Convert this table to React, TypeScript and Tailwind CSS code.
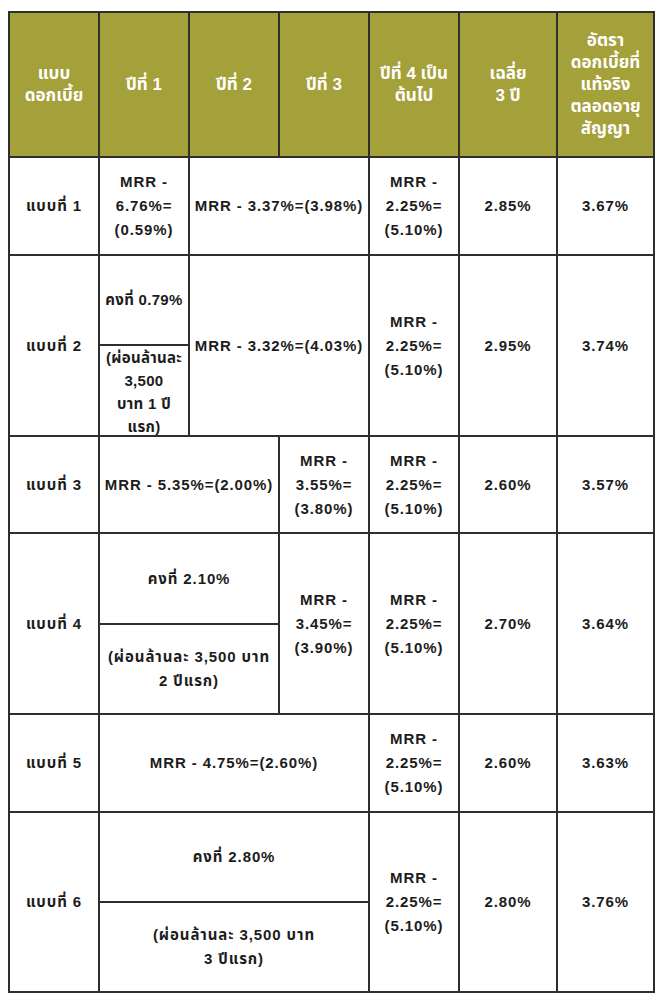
import React from 'react';

const Head: React.FC<{ children: React.ReactNode }> = ({ children }) => (
  <div className="flex items-center justify-center bg-[#a4a03a] px-1 text-center text-[17px] leading-[22px] font-bold text-white">
    <div>{children}</div>
  </div>
);

const Cell: React.FC<{ className?: string; children: React.ReactNode }> = ({ className = '', children }) => (
  <div className={`flex items-center justify-center bg-white px-1 text-center text-[15px] leading-[24px] font-bold tracking-[0.9px] text-[#1c1c1c] ${className}`}>
    <div>{children}</div>
  </div>
);

const Mrr225 = () => (
  <>
    MRR -<br />2.25%=<br />(5.10%)
  </>
);

export default function App() {
  return (
    <div className="min-h-screen bg-white pl-[8px] pt-[11px] font-['Liberation_Sans','Noto_Sans_Thai','Noto_Sans',sans-serif]">
      <div className="grid w-fit grid-cols-[88px_88px_88px_88px_88px_96px_95px] grid-rows-[143px_96px_88px_89px_95px_89px_88px_96px_88px_88px] gap-[2px] border-2 border-[#2e2e2e] bg-[#2e2e2e]">
        {/* header */}
        <Head>แบบ<br />ดอกเบี้ย</Head>
        <Head>ปีที่ 1</Head>
        <Head>ปีที่ 2</Head>
        <Head>ปีที่ 3</Head>
        <Head>ปีที่ 4 เป็น<br />ต้นไป</Head>
        <Head>เฉลี่ย<br />3 ปี</Head>
        <Head>อัตรา<br />ดอกเบี้ยที่<br />แท้จริง<br />ตลอดอายุ<br />สัญญา</Head>

        {/* แบบที่ 1 */}
        <Cell className="col-start-1 row-start-2">แบบที่ 1</Cell>
        <Cell className="col-start-2 row-start-2">MRR -<br />6.76%=<br />(0.59%)</Cell>
        <Cell className="col-start-3 col-span-2 row-start-2">MRR - 3.37%=(3.98%)</Cell>
        <Cell className="col-start-5 row-start-2"><Mrr225 /></Cell>
        <Cell className="col-start-6 row-start-2">2.85%</Cell>
        <Cell className="col-start-7 row-start-2">3.67%</Cell>

        {/* แบบที่ 2 */}
        <Cell className="col-start-1 row-start-3 row-span-2">แบบที่ 2</Cell>
        <Cell className="col-start-2 row-start-3 !px-0 !tracking-[0.3px] whitespace-nowrap">คงที่ 0.79%</Cell>
        <Cell className="col-start-2 row-start-4 items-start !px-0 !leading-[23px] !tracking-[0.3px] whitespace-nowrap">(ผ่อนล้านละ<br />3,500<br />บาท 1 ปี<br />แรก)</Cell>
        <Cell className="col-start-3 col-span-2 row-start-3 row-span-2">MRR - 3.32%=(4.03%)</Cell>
        <Cell className="col-start-5 row-start-3 row-span-2"><Mrr225 /></Cell>
        <Cell className="col-start-6 row-start-3 row-span-2">2.95%</Cell>
        <Cell className="col-start-7 row-start-3 row-span-2">3.74%</Cell>

        {/* แบบที่ 3 */}
        <Cell className="col-start-1 row-start-5">แบบที่ 3</Cell>
        <Cell className="col-start-2 col-span-2 row-start-5">MRR - 5.35%=(2.00%)</Cell>
        <Cell className="col-start-4 row-start-5">MRR -<br />3.55%=<br />(3.80%)</Cell>
        <Cell className="col-start-5 row-start-5"><Mrr225 /></Cell>
        <Cell className="col-start-6 row-start-5">2.60%</Cell>
        <Cell className="col-start-7 row-start-5">3.57%</Cell>

        {/* แบบที่ 4 */}
        <Cell className="col-start-1 row-start-6 row-span-2">แบบที่ 4</Cell>
        <Cell className="col-start-2 col-span-2 row-start-6">คงที่ 2.10%</Cell>
        <Cell className="col-start-2 col-span-2 row-start-7">(ผ่อนล้านละ 3,500 บาท<br />2 ปีแรก)</Cell>
        <Cell className="col-start-4 row-start-6 row-span-2">MRR -<br />3.45%=<br />(3.90%)</Cell>
        <Cell className="col-start-5 row-start-6 row-span-2"><Mrr225 /></Cell>
        <Cell className="col-start-6 row-start-6 row-span-2">2.70%</Cell>
        <Cell className="col-start-7 row-start-6 row-span-2">3.64%</Cell>

        {/* แบบที่ 5 */}
        <Cell className="col-start-1 row-start-8">แบบที่ 5</Cell>
        <Cell className="col-start-2 col-span-3 row-start-8">MRR - 4.75%=(2.60%)</Cell>
        <Cell className="col-start-5 row-start-8"><Mrr225 /></Cell>
        <Cell className="col-start-6 row-start-8">2.60%</Cell>
        <Cell className="col-start-7 row-start-8">3.63%</Cell>

        {/* แบบที่ 6 */}
        <Cell className="col-start-1 row-start-9 row-span-2">แบบที่ 6</Cell>
        <Cell className="col-start-2 col-span-3 row-start-9">คงที่ 2.80%</Cell>
        <Cell className="col-start-2 col-span-3 row-start-10">(ผ่อนล้านละ 3,500 บาท<br />3 ปีแรก)</Cell>
        <Cell className="col-start-5 row-start-9 row-span-2"><Mrr225 /></Cell>
        <Cell className="col-start-6 row-start-9 row-span-2">2.80%</Cell>
        <Cell className="col-start-7 row-start-9 row-span-2">3.76%</Cell>
      </div>
    </div>
  );
}
